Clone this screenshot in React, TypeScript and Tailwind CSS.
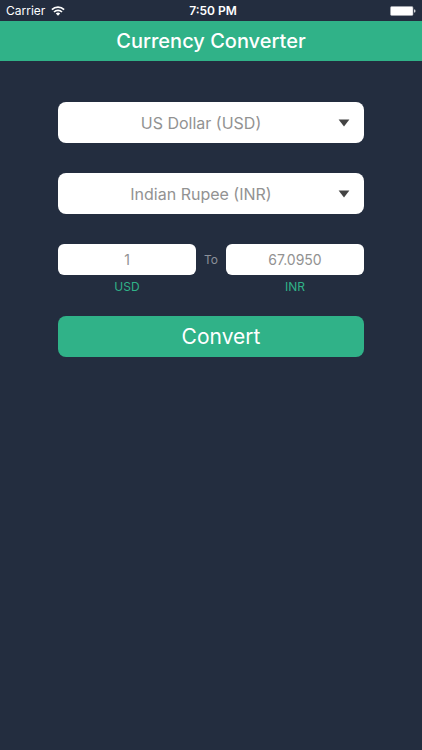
import { useState } from "react";

const CURRENCIES = [
  { code: "USD", name: "US Dollar", perDollar: 1 },
  { code: "INR", name: "Indian Rupee", perDollar: 67.095 },
];

const rateOf = (code: string) => CURRENCIES.find((c) => c.code === code)?.perDollar ?? 1;

function StatusBar() {
  return (
    <div className="grid h-[21px] grid-cols-3 items-center px-[6px] text-[12px] leading-4 text-white">
      <div className="flex items-center gap-[6px]">
        <span>Carrier</span>
        <svg viewBox="0 0 14 10" className="h-[10px] w-[14px]" aria-hidden="true">
          <g fill="none" stroke="currentColor" strokeWidth="1.7">
            <path d="M0.9 3.6 A8.6 8.6 0 0 1 13.1 3.6" />
            <path d="M3 6 A5.6 5.6 0 0 1 11 6" />
          </g>
          <path d="M7 9.8 L4.8 7.6 A3.1 3.1 0 0 1 9.2 7.6 Z" fill="currentColor" />
        </svg>
      </div>
      <span className="pl-1 text-center font-semibold">7:50 PM</span>
      <svg viewBox="0 0 26 10" className="h-[10px] w-[26px] justify-self-end" aria-hidden="true">
        <rect x="0.5" y="0.5" width="22.5" height="9" rx="1.2" fill="#ffffff" stroke="#a7abb2" strokeWidth="0.6" />
        <path d="M24 3.4 h0.6 a0.8 0.8 0 0 1 0.8 0.8 v1.6 a0.8 0.8 0 0 1 -0.8 0.8 h-0.6 z" fill="#d3d5d9" />
      </svg>
    </div>
  );
}

type SelectProps = {
  label: string;
  value: string;
  onChange: (code: string) => void;
};

function CurrencySelect({ label, value, onChange }: SelectProps) {
  return (
    <div className="relative">
      <select
        aria-label={label}
        value={value}
        onChange={(e) => onChange(e.target.value)}
        className="block h-[41px] w-full appearance-none rounded-lg bg-white pr-5 text-center text-[16px] text-[#929292] outline-none"
      >
        {CURRENCIES.map((c) => (
          <option key={c.code} value={c.code}>
            {c.name} ({c.code})
          </option>
        ))}
      </select>
      <svg
        viewBox="0 0 12 8"
        className="pointer-events-none absolute inset-y-0 right-[14px] my-auto h-2 w-3"
        aria-hidden="true"
      >
        <path d="M0.6 0.5 H11.4 L6 7.5 Z" fill="#434343" />
      </svg>
    </div>
  );
}

export default function App() {
  const [from, setFrom] = useState("USD");
  const [to, setTo] = useState("INR");
  const [amount, setAmount] = useState("1");
  const [result, setResult] = useState("67.0950");

  const convert = () => {
    const n = Number(amount) || 0;
    setResult(((n * rateOf(to)) / rateOf(from)).toFixed(4));
  };

  const field = "block h-[31px] w-full rounded-md bg-white text-center text-[14px] text-[#929292] outline-none";
  const code = "mt-1 block text-center text-[12px] leading-4 text-[#30b288]";

  return (
    <div className="min-h-screen bg-[#232d3f] font-['Inter',sans-serif]">
      <StatusBar />
      <header className="flex h-10 items-center justify-center bg-[#30b288]">
        <h1 className="text-[20px] font-medium text-white">Currency Converter</h1>
      </header>

      <main className="px-[58px] pt-[41px]">
        <div className="flex flex-col gap-[30px]">
          <CurrencySelect label="From currency" value={from} onChange={setFrom} />
          <CurrencySelect label="To currency" value={to} onChange={setTo} />

          <div className="flex">
            <div className="min-w-0 flex-1">
              <input id="amount" inputMode="decimal" value={amount} onChange={(e) => setAmount(e.target.value)} className={field} />
              <label htmlFor="amount" className={code}>{from}</label>
            </div>
            <span className="w-[30px] text-center text-[12px] leading-[31px] text-[#8b9099]">To</span>
            <div className="min-w-0 flex-1">
              <input id="result" readOnly value={result} className={field} />
              <label htmlFor="result" className={code}>{to}</label>
            </div>
          </div>
        </div>

        <button
          type="button"
          onClick={convert}
          className="mt-[21px] h-[41px] w-full rounded-lg bg-[#30b288] pl-5 text-[21px] text-white"
        >
          Convert
        </button>
      </main>
    </div>
  );
}
